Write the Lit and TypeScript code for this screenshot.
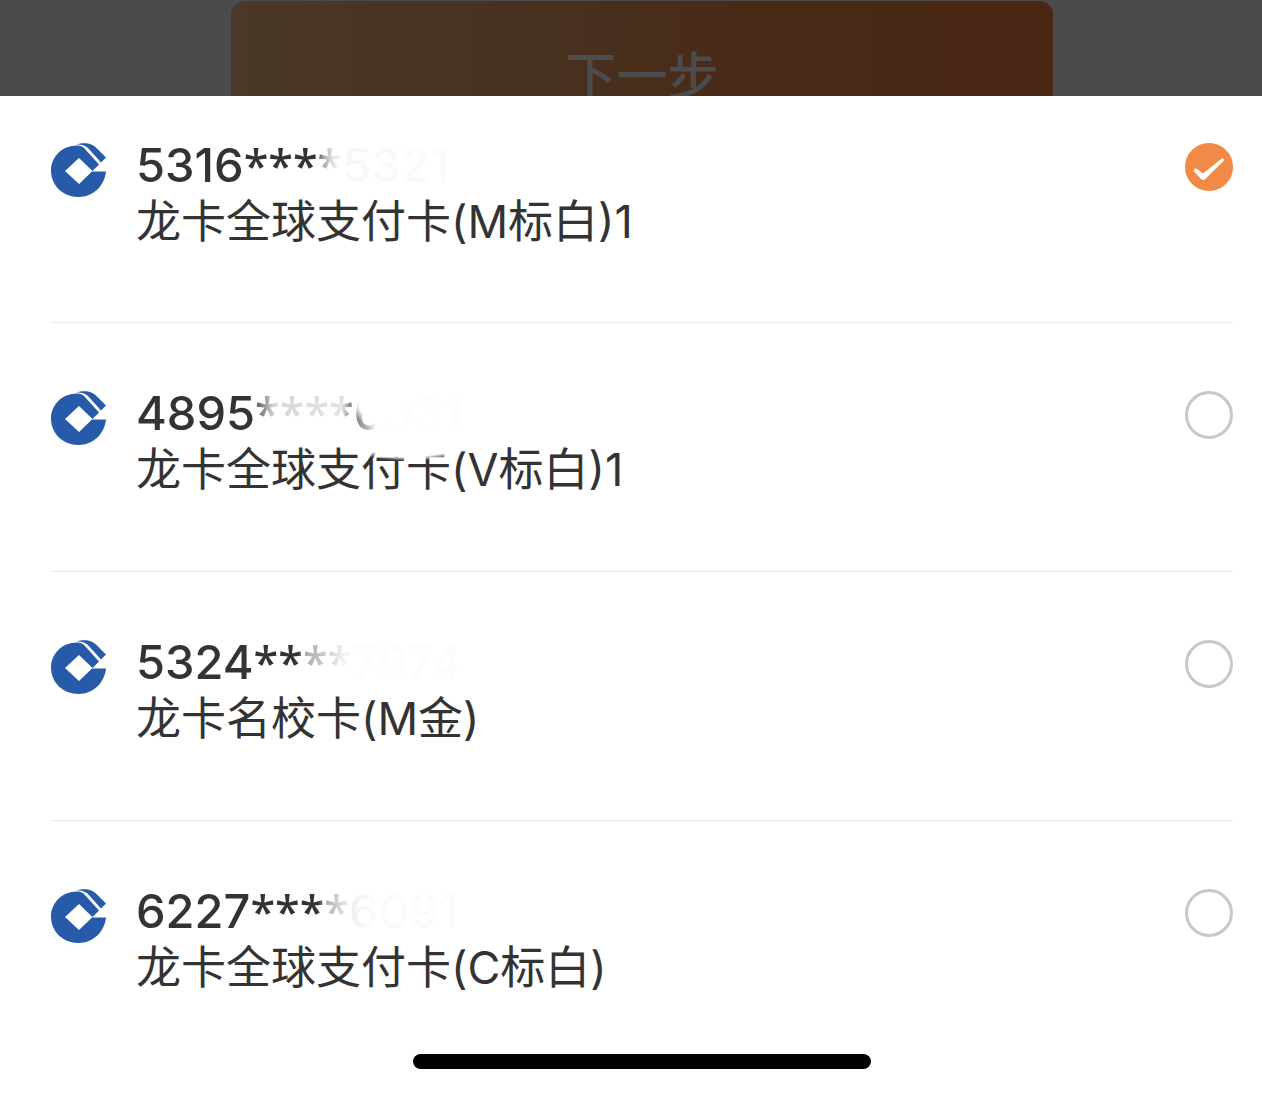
import { LitElement, html, css } from "lit";
import { customElement, state } from "lit/decorators.js";
import { styleMap } from "lit/directives/style-map.js";

interface Card {
  id: string;
  head: string;
  tail: string;
  name: string;
  /** Opacity stops that fade out the private part of the number. */
  fade: string;
  smudged?: boolean;
}

const CARDS: Card[] = [
  {
    id: "c1",
    head: "5316",
    tail: "5321",
    name: "龙卡全球支付卡(M标白)1",
    fade: "#000 180px, #0006 188px, #0002 197px, #0000000a 206px, #00000004 320px",
  },
  {
    id: "c2",
    head: "4895",
    tail: "6031",
    name: "龙卡全球支付卡(V标白)1",
    fade: "#000 116px, #0009 126px, #0003 138px, #0002 206px, #000a 216px, #0006 230px, #00000003 240px",
    smudged: true,
  },
  {
    id: "c3",
    head: "5324",
    tail: "7974",
    name: "龙卡名校卡(M金)",
    fade: "#000 162px, #0006 170px, #0004 188px, #0001 208px, #00000004 222px",
  },
  {
    id: "c4",
    head: "6227",
    tail: "6091",
    name: "龙卡全球支付卡(C标白)",
    fade: "#000 182px, #0006 190px, #0003 204px, #0001 218px, #00000005 234px",
  },
];

@customElement("bank-logo")
export class BankLogo extends LitElement {
  static styles = css`
    :host {
      display: block;
      flex: none;
      width: 56px;
      height: 56px;
    }
    .mark {
      display: block;
      width: 100%;
      height: 100%;
    }
  `;
  render() {
    return html`<svg class="mark" viewBox="0 0 56 56" aria-hidden="true">
      <path
        fill="#275baa"
        d="M26 2.500C11 2.500 0 14 0 27.500C0 42.500 12 54 27.500 54C42 54 53.500 43 55 28.500H41L28 41L14 28L28 15L41.500 28L48 21.500L33.500 5.500Q31 2.600 26 2.500Z"
      />
      <path
        fill="#275baa"
        d="M25.500 1.500C29 .2 33 -.2 37 .4C42 1.500 44 3.500 46 5.500L55 14.500L50 19.500L36.500 4.500Q32 1 25.500 1.500Z"
      />
    </svg>`;
  }
}

@customElement("app-root")
export class AppRoot extends LitElement {
  @state() private selected = "c1";

  static styles = css`
    :host {
      display: block;
      min-height: 100vh;
      background: #fff;
      color: #333;
      font-family: Inter, "Noto Sans CJK SC", sans-serif;
    }
    .backdrop {
      display: flex;
      justify-content: center;
      align-items: flex-start;
      height: 96px;
      box-sizing: border-box;
      padding: 1px 29px 0 51px;
      overflow: hidden;
      background: #4b4b4b;
    }
    .next {
      flex: none;
      width: 69.5%;
      height: 144px;
      border: 0;
      border-radius: 14px;
      background: linear-gradient(90deg, #4a3829, #48301f 40%, #482a16 65%, #482814);
      color: #4c4c4c;
      font: inherit;
      font-size: 51px;
      font-weight: 500;
    }
    .sheet {
      padding: 0 29px 0 51px;
    }
    .cards {
      margin: 0;
      padding: 0;
      border: 0;
    }
    .card {
      display: flex;
      align-items: flex-start;
      gap: 29px;
      padding: 68px 0 73px;
      border-bottom: 1px solid #ececec;
      cursor: pointer;
    }
    .card:first-child {
      padding: 47px 0 72px;
    }
    .card:last-child {
      padding-bottom: 58px;
      border-bottom: 0;
    }
    .text {
      position: relative;
      flex: 1;
      min-width: 0;
    }
    .number,
    .name {
      display: block;
      white-space: nowrap;
    }
    .number {
      height: 44px;
      font-size: 47px;
      font-weight: 500;
      line-height: 44px;
    }
    .stars {
      font-family: "Noto Sans", sans-serif;
      font-size: 45px;
      line-height: 1px;
    }
    .name {
      margin-top: 6px;
      font-size: 45px;
      line-height: 57px;
    }
    .smudge {
      position: absolute;
      left: 214px;
      top: -6px;
      width: 120px;
      height: 76px;
      background:
        radial-gradient(closest-side, #fff 70%, #fff0) 0 46px / 120px 30px no-repeat,
        radial-gradient(closest-side, #fff 75%, #fff0) 2px -4px / 60px 46px no-repeat;
    }
    .choice {
      display: grid;
      flex: none;
    }
    .choice > * {
      grid-area: 1 / 1;
    }
    .radio {
      appearance: none;
      width: 48px;
      height: 48px;
      margin: 0;
      border: 3px solid #c8c8c8;
      border-radius: 50%;
      cursor: pointer;
    }
    .radio:checked {
      border-color: #f08a46;
      background: #f08a46;
    }
    .tick {
      width: 48px;
      height: 48px;
      pointer-events: none;
    }
    .home {
      width: 38.8%;
      height: 15px;
      margin: 0 auto;
      border-radius: 8px;
      background: #000;
    }
  `;

  private renderCard(card: Card) {
    const mask = `linear-gradient(90deg, ${card.fade})`;
    return html`<label class="card" for=${card.id}>
      <bank-logo></bank-logo>
      <span class="text">
        <span class="number" style=${styleMap({ maskImage: mask })}
          >${card.head}<span class="stars">****</span>${card.tail}</span
        >
        <span class="name">${card.name}</span>
        ${card.smudged ? html`<span class="smudge"></span>` : null}
      </span>
      <span class="choice">
        <input
          class="radio"
          type="radio"
          name="card"
          id=${card.id}
          .checked=${this.selected === card.id}
          @change=${() => (this.selected = card.id)}
        />
        ${this.selected === card.id
          ? html`<svg class="tick" viewBox="0 0 48 48" aria-hidden="true">
              <path
                fill="#fff"
                d="M9 26.500Q10 25 12 26L18 30.500L36.500 15.800Q38.500 15 39 16.800Q39 17.500 38.500 18L20 36.200Q18 37.800 16 36L9.200 28.500Q8.600 27.500 9 26.500Z"
              />
            </svg>`
          : null}
      </span>
    </label>`;
  }

  render() {
    return html`
      <div class="backdrop"><button class="next" type="button">下一步</button></div>
      <main class="sheet">
        <fieldset class="cards">${CARDS.map((c) => this.renderCard(c))}</fieldset>
        <div class="home"></div>
      </main>
    `;
  }
}
